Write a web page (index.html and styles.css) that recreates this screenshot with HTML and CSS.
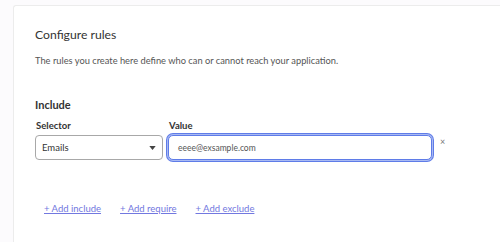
FILE: index.html
```html
<!DOCTYPE html>
<html>
<head>
<meta charset="utf-8">
<link rel="stylesheet" href="styles.css">
</head>
<body>
<div class="card">
  <h2 class="title">Configure rules</h2>
  <p class="desc">The rules you create here define who can or cannot reach your application.</p>
  <h3 class="section">Include</h3>
  <div class="row">
    <div class="field sel-field">
      <label class="label">Selector</label>
      <div class="select">
        <span>Emails</span>
        <svg class="caret" width="8" height="5" viewBox="0 0 8 5"><path d="M0 0h8L4 5z" fill="#444"/></svg>
      </div>
    </div>
    <div class="field val-field">
      <label class="label">Value</label>
      <div class="input">eeee@exsample.com</div>
    </div>
    <span class="remove">×</span>
  </div>
  <div class="links">
    <a class="link">+ Add include</a>
    <a class="link">+ Add require</a>
    <a class="link">+ Add exclude</a>
  </div>
</div>
</body>
</html>
```
FILE: styles.css
```css
html, body { margin: 0; padding: 0; }
body {
  background: #fcfbfd;
  font-family: "Lato", "Open Sans", sans-serif;
  color: #333;
  height: 242px;
  overflow: hidden;
}
.card {
  box-sizing: border-box;
  margin: 5px 0 0 13px;
  background: #fff;
  border: 1px solid #ececec;
  border-right: none;
  border-bottom: none;
  border-radius: 3px 0 0 0;
  padding: 20px 0 0 21px;
  height: 237px;
}
.title {
  margin: 0;
  font-size: 12.2px;
  font-weight: 400;
  color: #333;
  line-height: 18px;
}
.desc {
  margin: 10px 0 0;
  font-size: 9.3px;
  color: #555;
  line-height: 14px;
}
.section {
  margin: 30px 0 0;
  font-size: 11px;
  font-weight: 700;
  color: #333;
  line-height: 14px;
}
.row {
  display: flex;
  align-items: flex-start;
  margin-top: 7px;
}
.field { display: flex; flex-direction: column; }
.label {
  font-size: 9.5px;
  font-weight: 700;
  color: #333;
  line-height: 12px;
  margin-top: 1px;
  margin-bottom: 3px;
  padding-left: 1px;
}
.sel-field { width: 128px; }
.val-field { width: 264px; margin-left: 5px; }
.select {
  box-sizing: border-box;
  height: 25px;
  border: 1px solid #a8a8a8;
  border-radius: 4px;
  display: flex;
  align-items: center;
  justify-content: space-between;
  padding: 0 6px 0 6px;
  font-size: 9.5px;
  color: #333;
}
.caret { width: 7px; height: 4px; }
.input {
  box-sizing: border-box;
  height: 25px;
  border: 1px solid #5f7ce8;
  box-shadow: 0 0 0 1px #a9baf3, 0 0 0 2px #5f7ce8;
  border-radius: 5px;
  display: flex;
  align-items: center;
  padding: 0 9px;
  font-size: 8.5px;
  color: #555;
}
.remove {
  margin: 17px 0 0 8px;
  font-size: 9px;
  color: #777;
}
.links {
  display: flex;
  gap: 19px;
  margin: 43px 0 0 9px;
}
.link {
  font-size: 9.5px;
  color: #7278e0;
  text-decoration: underline;
}
```
